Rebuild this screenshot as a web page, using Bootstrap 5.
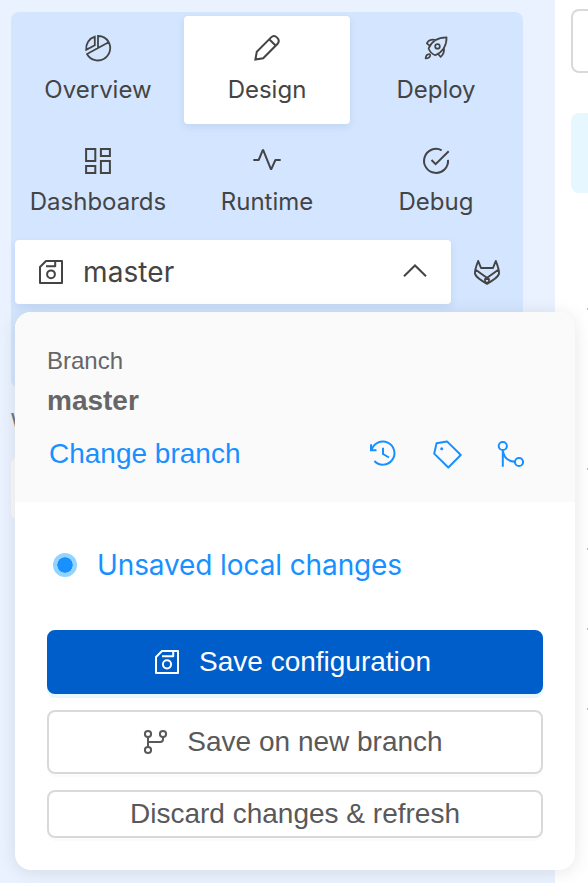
<!DOCTYPE html>
<html lang="en">
<head>
<meta charset="utf-8">
<meta name="viewport" content="width=device-width, initial-scale=1">
<title>Branch menu</title>
<link href="https://cdn.jsdelivr.net/npm/bootstrap@5.3.0/dist/css/bootstrap.min.css" rel="stylesheet">
<style>
body{font-family:"Liberation Sans",Arial,sans-serif;color:#444;background:#fff}
.screen{height:883px}
.side{width:555px;background:#ebf2ff;padding:12px 32px 0 11px}
.tools{height:376px;background:#d4e6ff;border-radius:8px;padding:4px;display:flex;flex-direction:column;gap:4px}
.tabs{display:grid;grid-template-columns:repeat(3,166px);grid-auto-rows:108px;gap:4px 3px}
.tab-item{font:400 24px/36px Inter,sans-serif;color:#444;padding-top:16px;border-radius:4px;text-decoration:none}
.tab-item svg{margin-bottom:8px}
.tab-item.low svg{margin-top:1px;margin-bottom:7px}
.tab-item.current,.picker{background:#fff;box-shadow:0 3px 8px rgba(40,80,150,.12)}
.picker{width:436px;height:64px;border-radius:4px;padding:0 20px;font:400 28px/64px Inter,sans-serif;letter-spacing:.1px}
.git{width:64px}
svg{width:32px;height:32px;flex:none;display:block;fill:none;stroke:currentColor;stroke-width:2}
.heading{font:400 24px/36px "Liberation Sans",sans-serif;color:#777;margin-top:16px}
.field{height:63px;margin-top:17px;border-radius:8px;background:#fafafa}
.main-area{padding:9px 0 0 16px;overflow:hidden}
.input-edge{width:100px;height:64px;border:2px solid #d9d9d9;border-radius:8px}
.notice{width:100px;height:80px;background:#e6f7ff;border-radius:8px;margin-top:40px}
.ticks{margin:115px 0 0 16px}
.ticks i{display:block;width:4px;height:2px;background:#bbb;margin-bottom:78px}
.ticks i:first-child{margin-bottom:158px}
.branch-menu{left:15px;top:312px;width:560px;height:558px;border-radius:16px;background:#fff;box-shadow:0 2px 18px rgba(0,0,0,.1);overflow:hidden}
.menu-top{height:190px;background:#fafafa;padding:31px 32px 0;color:#666}
.menu-top small{font-size:24px;line-height:36px;display:block}
.menu-top strong{font-size:28px;line-height:44px;display:block}
.change{font-size:28px;line-height:42px;color:#1890ff;text-decoration:none;margin-left:2px}
.menu-links{color:#1890ff;margin-top:10px}
.menu-icons{gap:32px;margin-right:16px}
.menu-body{padding:42px 32px 0}
.state{font:400 28px/42px Inter,sans-serif;color:#1890ff;letter-spacing:-.11px;padding-left:6px;gap:20px}
.dot{width:24px;height:24px;border-radius:50%;border:4px solid #91d5ff;background:#1890ff;background-clip:padding-box}
.actions{margin-top:44px}
.act{height:64px;font-size:28px;line-height:42px;border:2px solid #d9d9d9;border-radius:8px;color:#595959;background:#fff;box-shadow:0 3px 0 rgba(0,0,0,.015);padding:0 8px 0 0;gap:16px}
.act.main-act{background:#005ecb;border-color:#005ecb;color:#fff;box-shadow:0 4px 0 #e6f7ff}
.act.short{height:48px;padding:0}
</style>
</head>
<body>
<div class="screen d-flex position-relative overflow-hidden">
  <aside class="side flex-shrink-0">
    <div class="tools">
      <nav class="tabs">
        <a class="tab-item d-flex flex-column align-items-center"><svg viewBox="0 0 32 32"><path stroke-width="1.8" d="M12.8 4.7V13.3L4.2 17.8A12.2 12.2 0 0 1 12.8 4.7ZM16 4V16L26.7 10.2A12 12 0 0 0 16 4ZM16 16 5 22A12.2 12.2 0 1 0 26.7 10.2"/></svg>Overview</a>
        <a class="tab-item current d-flex flex-column align-items-center"><svg viewBox="0 0 32 32"><path d="M4.4 27.5 5.8 19.8 20.1 5.4Q23 2.6 26.1 5.6T26.6 11.8L12.2 26.3ZM18.2 7.2 24.8 13.8"/></svg>Design</a>
        <a class="tab-item d-flex flex-column align-items-center"><svg viewBox="0 0 32 32" stroke-linejoin="round"><path stroke-width="1.7" d="M26.6 5.3C18 5.4 11.5 9 8.6 16.5Q10.5 21.5 15.2 23.3C23 20 26.6 13.5 26.6 5.3ZM16.3 8Q9.5 6.3 6.8 11.3L9.9 13.8M23.9 14.8Q25 21 20.7 25L17.9 21.8M9.2 22.2Q5.9 22.4 5.6 26.4 9.7 26.1 10.2 23.6Q10.3 22.2 9.2 22.2Z"/><circle stroke-width="1.7" cx="17.5" cy="14.4" r="2.3"/></svg>Deploy</a>
        <a class="tab-item low d-flex flex-column align-items-center"><svg viewBox="0 0 32 32"><path d="M4.1 4.1H13.3V15.9H4.1ZM18.9 4.1H27.9V10.9H18.9ZM4.1 21.1H13.3V27.9H4.1ZM18.9 16.1H27.9V27.9H18.9Z"/></svg>Dashboards</a>
        <a class="tab-item low d-flex flex-column align-items-center"><svg viewBox="0 0 32 32"><path stroke-linejoin="bevel" d="M2.3 15H7.7L12 4.6 20.1 24.6 24.4 15H29.7"/></svg>Runtime</a>
        <a class="tab-item low d-flex flex-column align-items-center"><svg viewBox="0 0 32 32"><path d="M21.7 5.3A12 12 0 1 0 28 14.8M11.5 15 15.6 19.1 28.7 6.2"/></svg>Debug</a>
      </nav>
      <div class="d-flex">
        <div class="picker d-flex align-items-center"><svg viewBox="0 0 32 32" stroke-linejoin="round"><path d="M5 11 11 5H27V27H5ZM11 10.2H20.2V5"/><circle cx="16" cy="18.3" r="3.9"/></svg><span class="ms-3">master</span><svg class="ms-auto" viewBox="0 0 32 32"><path d="M5 20.3 16 9.5 27 20.3"/></svg></div>
        <div class="git d-flex align-items-center justify-content-center ms-1"><svg viewBox="0 0 32 32" stroke-linejoin="round"><path stroke-width="2" d="M7.2 5 10 12H22L24.8 5Q28.8 15 27.9 18.2 26.5 22 16 27.8 5.5 22 4.1 18.2 3.2 15 7.2 5ZM5 14 18.6 23.8M27 14 13.4 23.8"/><circle cx="16" cy="24.6" r="2" stroke-width="1.6"/></svg></div>
      </div>
    </div>
    <div class="heading">W</div>
    <div class="field"></div>
  </aside>
  <main class="main-area flex-grow-1">
    <div class="input-edge"></div>
    <div class="notice"></div>
    <div class="ticks"><i></i><i></i><i></i><i></i><i></i></div>
  </main>
  <section class="branch-menu position-absolute">
    <div class="menu-top">
      <small>Branch</small>
      <strong>master</strong>
      <div class="menu-links d-flex align-items-center">
        <a class="change">Change branch</a>
        <div class="menu-icons d-flex ms-auto">
          <svg viewBox="0 0 32 32"><path d="M4 6.2V12.3H9.5M4.6 12.2A11.6 11.6 0 1 1 7.4 23M16 9.7V16L22 19.5"/></svg>
          <svg viewBox="0 0 32 32" stroke-linejoin="round"><path d="M5.6 5.3 16 3.4 29.8 17 17.3 29.5 3.2 15.6Z"/><circle cx="10.7" cy="10.7" r="1.5" fill="currentColor" stroke="none"/></svg>
          <svg viewBox="0 0 32 32"><circle cx="7.8" cy="8" r="4.1"/><circle cx="24" cy="24" r="4.1"/><path d="M7.8 12V28.8M7.8 12Q9 23 19.8 23.8"/></svg>
        </div>
      </div>
    </div>
    <div class="menu-body">
      <div class="state d-flex align-items-center"><span class="dot"></span><span>Unsaved local changes</span></div>
      <div class="d-grid gap-3 actions">
        <button class="btn act main-act d-flex align-items-center justify-content-center"><svg viewBox="0 0 32 32" stroke-linejoin="round"><path d="M5 11 11 5H27V27H5ZM11 10.2H22.2V5"/><circle cx="16" cy="18.3" r="4.1"/></svg>Save configuration</button>
        <button class="btn act d-flex align-items-center justify-content-center"><svg viewBox="0 0 32 32"><circle cx="9" cy="8" r="3.1"/><circle cx="24" cy="8" r="3.1"/><circle cx="9" cy="24" r="3.1"/><path d="M9 11V21M24 11V13.2Q24 16 21.2 16H9"/></svg>Save on new branch</button>
        <button class="btn act short d-flex align-items-center justify-content-center">Discard changes &amp; refresh</button>
      </div>
    </div>
  </section>
</div>
<script src="https://cdn.jsdelivr.net/npm/bootstrap@5.3.0/dist/js/bootstrap.bundle.min.js"></script>
</body>
</html>
